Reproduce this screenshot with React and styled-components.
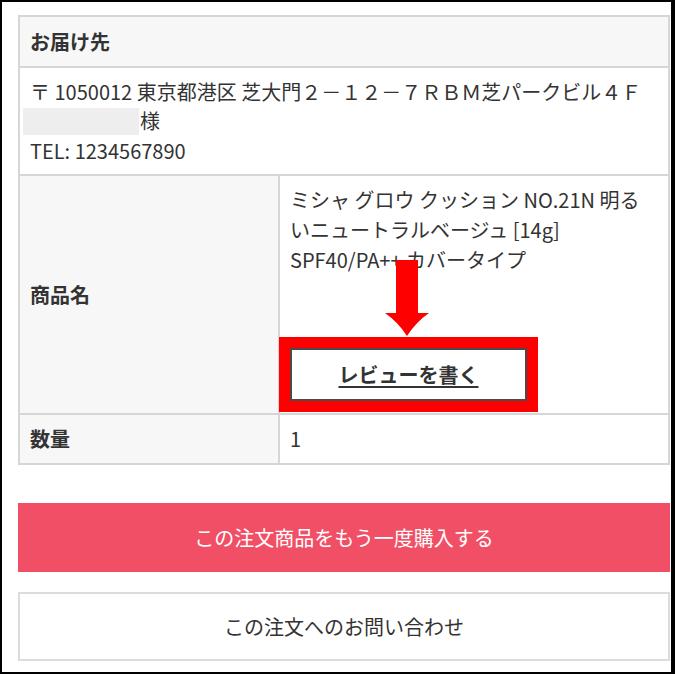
import React from "react";
import styled, { createGlobalStyle } from "styled-components";

const Global = createGlobalStyle`
  html, body { margin: 0; padding: 0; background: #fff; }
  body {
    font-family: "Noto Sans CJK JP", "Noto Sans", sans-serif;
    color: #333;
  }
  * { box-sizing: border-box; }
`;

const Frame = styled.div`
  width: 675px;
  height: 674px;
  border-style: solid;
  border-color: #000;
  border-width: 2px 4px 2px 2px;
  padding: 13px 1px 0 16px;
  background: #fff;
  overflow: hidden;
`;

const Table = styled.table`
  width: 652px;
  border-collapse: collapse;
  table-layout: fixed;
  font-size: 20px;
  line-height: 29.6px;
  border: 2px solid #d6d6d6;
`;

const Cell = styled.td`
  border: 2px solid #d6d6d6;
  padding: ${(p) => p.$pad || "9px 10px"};
  text-align: left;
  vertical-align: ${(p) => p.$valign || "middle"};
  background: ${(p) => (p.$label ? "#f7f7f7" : "#fff")};
  font-weight: ${(p) => (p.$label ? 700 : 400)};
  color: #333;
  white-space: nowrap;
`;

const Redacted = styled.span`
  display: inline-block;
  width: 116px;
  height: 27px;
  margin-left: -7px;
  margin-right: 1px;
  background: #eeeeee;
  vertical-align: -6px;
`;

const ButtonWrap = styled.div`
  position: relative;
  margin-top: 74px;
  width: 237px;
`;

const ReviewButton = styled.a`
  display: flex;
  align-items: center;
  justify-content: center;
  height: 53px;
  width: 237px;
  border: 2px solid #4a4a4a;
  background: #fff;
  color: #333;
  font-weight: 700;
  text-decoration: underline;
  text-underline-offset: 3px;
  outline: 11px solid #ff0000;
  cursor: pointer;
`;

const Arrow = styled.svg`
  position: absolute;
  left: 95px;
  top: -88px;
  width: 44px;
  height: 76px;
`;

const Actions = styled.div`
  display: flex;
  flex-direction: column;
  gap: 20px;
  margin-top: 38px;
  width: 652px;
`;

const ActionButton = styled.button`
  height: 69px;
  width: 100%;
  font-family: inherit;
  font-size: 20px;
  border: 2px solid ${(p) => (p.$primary ? "#f04f65" : "#dcdcdc")};
  background: ${(p) => (p.$primary ? "#f04f65" : "#fff")};
  color: ${(p) => (p.$primary ? "#fff" : "#333")};
  cursor: pointer;
`;

export default function App() {
  return (
    <>
      <Global />
      <Frame>
        <Table>
          <colgroup>
            <col style={{ width: "260px" }} />
            <col />
          </colgroup>
          <tbody>
            <tr>
              <Cell as="th" colSpan={2} $label $pad="10px 10px 9px">
                お届け先
              </Cell>
            </tr>
            <tr>
              <Cell colSpan={2}>
                〒 1050012 東京都港区 芝大門２－１２－７ＲＢＭ芝パークビル４Ｆ
                <br />
                <Redacted />様
                <br />
                TEL: 1234567890
              </Cell>
            </tr>
            <tr>
              <Cell as="th" $label>
                商品名
              </Cell>
              <Cell $valign="top" $pad="9px 10px 12px">
                ミシャ グロウ クッション NO.21N 明る
                <br />
                いニュートラルベージュ [14g]
                <br />
                SPF40/PA++ カバータイプ
                <ButtonWrap>
                  <Arrow viewBox="0 0 44 76">
                    <rect x="11" y="0" width="22" height="55" fill="#ff0000" />
                    <path d="M0 53 L44 53 Q31 62 22 76 Q13 62 0 53 Z" fill="#ff0000" />
                  </Arrow>
                  <ReviewButton>レビューを書く</ReviewButton>
                </ButtonWrap>
              </Cell>
            </tr>
            <tr>
              <Cell as="th" $label>
                数量
              </Cell>
              <Cell>1</Cell>
            </tr>
          </tbody>
        </Table>
        <Actions>
          <ActionButton $primary>この注文商品をもう一度購入する</ActionButton>
          <ActionButton>この注文へのお問い合わせ</ActionButton>
        </Actions>
      </Frame>
    </>
  );
}
